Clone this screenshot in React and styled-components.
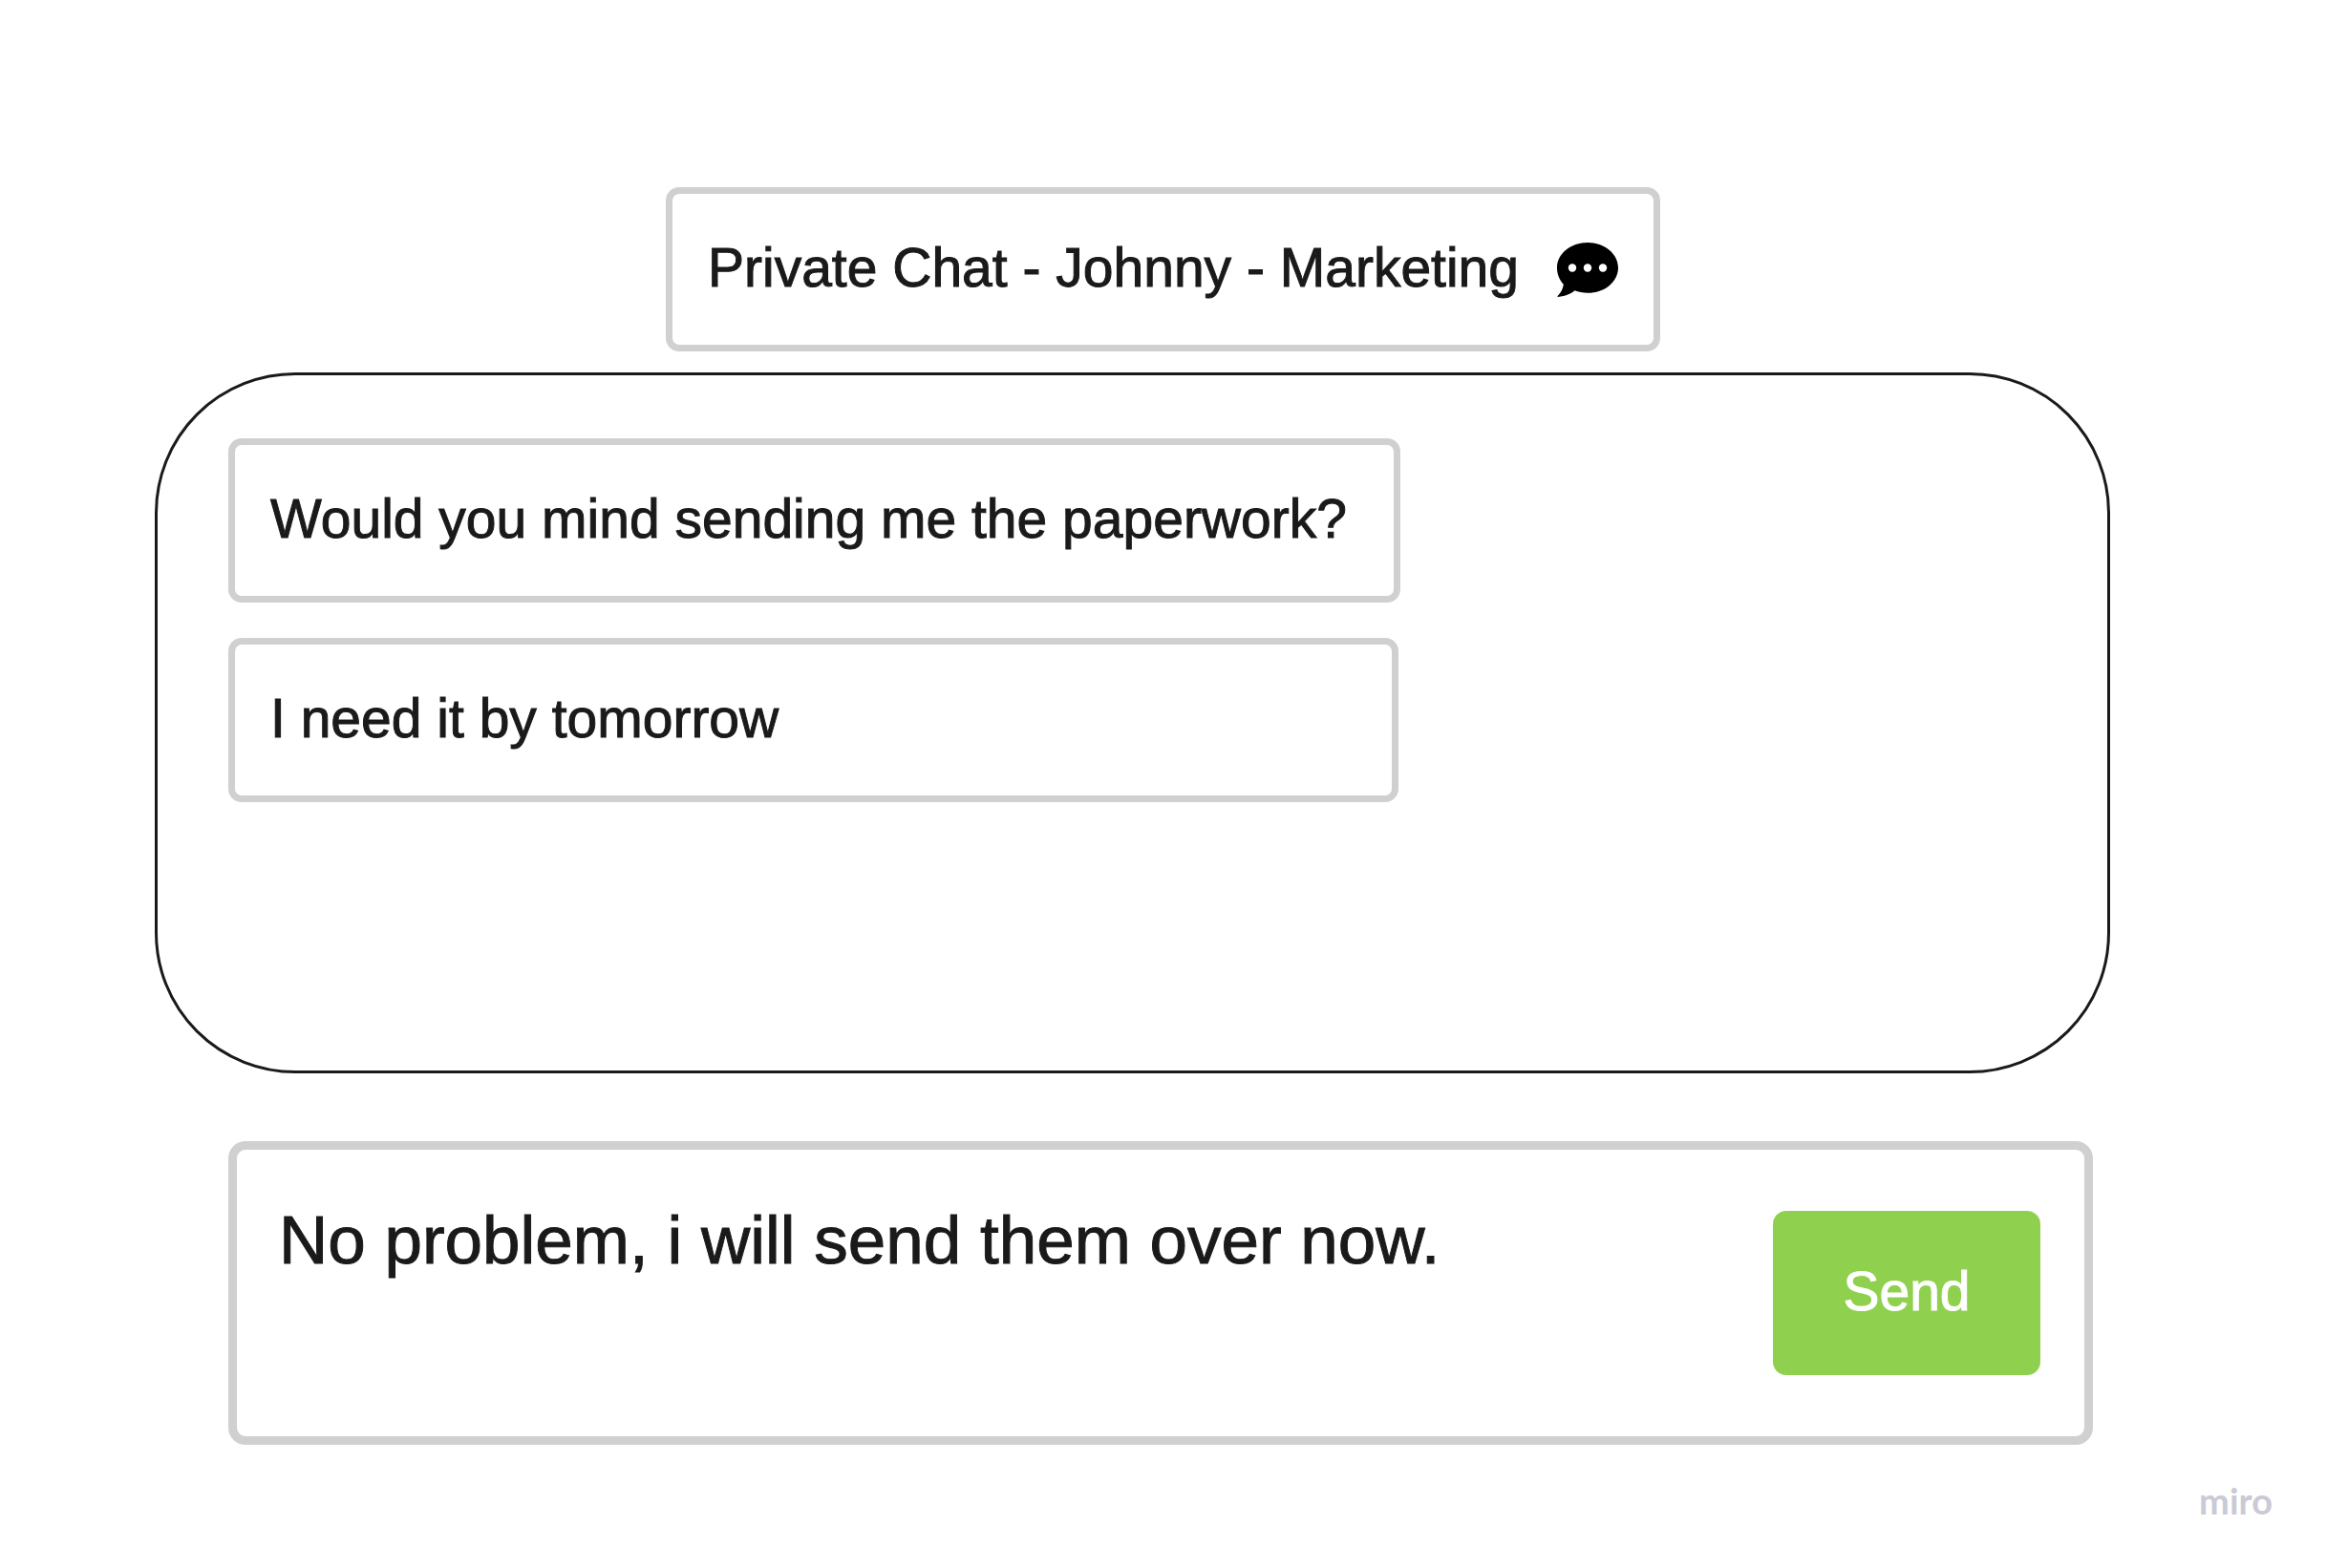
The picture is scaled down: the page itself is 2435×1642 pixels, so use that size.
import React from "react";
import styled, { createGlobalStyle } from "styled-components";

const ink = "#1a1a1a";
const line = "#d0d0d0";
const sans = '"Liberation Sans", Arial, Helvetica, sans-serif';

const GlobalStyle = createGlobalStyle`
  *, *::before, *::after {
    box-sizing: border-box;
  }
  body {
    margin: 0;
    background: #ffffff;
    color: ${ink};
    font-family: ${sans};
  }
`;

const Page = styled.div`
  display: flex;
  flex-direction: column;
  min-height: 100vh;
  padding-top: 196px;
  -webkit-text-stroke: 1px;
`;

const Header = styled.header`
  display: flex;
  align-items: center;
  align-self: center;
  gap: 40px;
  padding: 44px 37px 48px;
  border: 7px solid ${line};
  border-radius: 14px;
`;

const Title = styled.h1`
  margin: 0;
  font-size: 57px;
  font-weight: 400;
  line-height: 66px;
`;

const BubbleIcon = styled.svg`
  flex: none;
  width: 64px;
  height: 62px;
`;

const Conversation = styled.main`
  min-height: 734px;
  margin: 22px 226px 0 162px;
  padding: 66px 74px;
  border: 3px solid ${ink};
  border-radius: 147px;
`;

const MessageList = styled.ul`
  display: flex;
  flex-direction: column;
  align-items: flex-start;
  gap: 37px;
  margin: 0;
  padding: 0;
  list-style: none;
`;

const Message = styled.li`
  min-width: min(1225px, 100%);
  max-width: 100%;
  padding: 44px 49px 48px 37px;
  border: 7px solid ${line};
  border-radius: 14px;
  font-size: 57px;
  line-height: 66px;
`;

const Composer = styled.form`
  display: flex;
  align-items: center;
  gap: 40px;
  margin: 71px 244px 0 239px;
  padding: 0 46px 0 44px;
  border: 9px solid ${line};
  border-radius: 18px;
`;

const Draft = styled.textarea`
  flex: 1;
  align-self: stretch;
  min-width: 0;
  padding: 55px 0 0;
  border: 0;
  outline: 0;
  resize: none;
  overflow: hidden;
  background: transparent;
  color: ${ink};
  font-family: ${sans};
  font-size: 71px;
  line-height: 80px;
`;

const SendButton = styled.button`
  flex: none;
  width: 280px;
  margin: 64px 0;
  padding: 51px 0 55px;
  border: 0;
  border-radius: 14px;
  background: #8fd14f;
  color: #ffffff;
  font-family: ${sans};
  font-size: 57px;
  line-height: 66px;
  text-align: center;
  cursor: pointer;
`;

const Footer = styled.footer`
  display: flex;
  justify-content: flex-end;
  padding: 34px 56px 0;
`;

const Brand = styled.span`
  color: #cacad6;
  font-family: Lato, sans-serif;
  font-size: 38px;
  font-weight: 700;
  line-height: 48px;
  -webkit-text-stroke: 0;
`;

const messages = ["Would you mind sending me the paperwork?", "I need it by tomorrow"];

function ChatIcon() {
  return (
    <BubbleIcon viewBox="0 -5 64 62" aria-hidden="true">
      <path
        fill="#000000"
        d="M32 0C49.7 0 64 11.8 64 26.4S49.7 52.8 32 52.8c-4.8 0-9.400-.9-13.500-2.500C13.800 54.400 7 56.800 0 56.800c3.600-3.900 6.400-8.300 6.800-13.100C2.500 39 0 33 0 26.400 0 11.800 14.300 0 32 0Z"
      />
      <circle cx="16" cy="26.500" r="4.200" fill="#ffffff" />
      <circle cx="32" cy="26.500" r="4.200" fill="#ffffff" />
      <circle cx="48" cy="26.500" r="4.200" fill="#ffffff" />
    </BubbleIcon>
  );
}

export default function App() {
  return (
    <>
      <GlobalStyle />
      <Page>
        <Header>
          <Title>Private Chat - Johnny - Marketing</Title>
          <ChatIcon />
        </Header>
        <Conversation>
          <MessageList>
            {messages.map((text) => (
              <Message key={text}>{text}</Message>
            ))}
          </MessageList>
        </Conversation>
        <Composer onSubmit={(event) => event.preventDefault()}>
          <Draft
            aria-label="Message"
            rows={1}
            spellCheck={false}
            defaultValue="No problem, i will send them over now."
          />
          <SendButton type="submit">Send</SendButton>
        </Composer>
        <Footer>
          <Brand>miro</Brand>
        </Footer>
      </Page>
    </>
  );
}
